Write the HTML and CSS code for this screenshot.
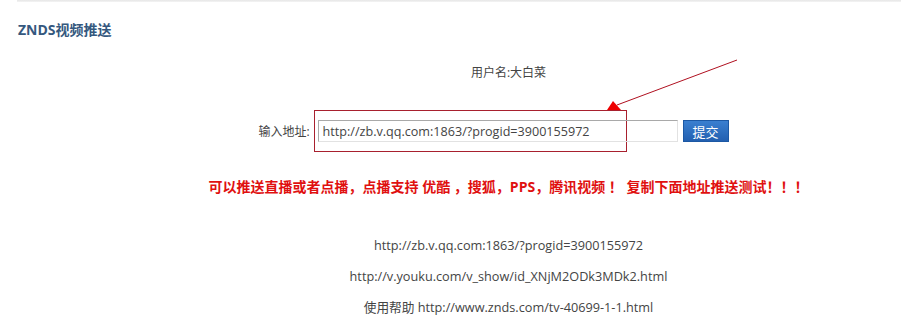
FILE: index.html
```html
<!DOCTYPE html>
<html lang="zh-CN">
<head>
  <meta charset="UTF-8" />
  <title>ZNDS视频推送</title>
  <link rel="stylesheet" href="styles.css">
</head>
<body>
  <div class="top-edge"></div>

  <h2 class="title">ZNDS视频推送</h2>

  <div class="panel">
    <div class="user">用户名:大白菜</div>

    <div class="push-row">
      <span class="label">输入地址:</span>
      <div class="mark">
        <input type="text" id="urlInput" value="http://zb.v.qq.com:1863/?progid=3900155972" />
        <svg class="arrow" width="140" height="56" viewBox="0 0 140 56">
          <line x1="132" y1="2" x2="12" y2="47" stroke="#b01020" stroke-width="1" />
          <polygon points="2,52 16,52 8,43" fill="#ee0000" />
        </svg>
      </div>
      <button class="submit">提交</button>
    </div>

    <div class="notice">可以推送直播或者点播，点播支持 优酷 ，搜狐，PPS，腾讯视频 ！ 复制下面地址推送测试！！！</div>

    <div class="links">
      <p>http://zb.v.qq.com:1863/?progid=3900155972</p>
      <p>http://v.youku.com/v_show/id_XNjM2ODk3MDk2.html</p>
      <p>使用帮助 http://www.znds.com/tv-40699-1-1.html</p>
    </div>
  </div>
</body>
</html>
```

FILE: styles.css
```css
html, body {
  margin: 0;
  padding: 0;
  background: #fff;
  font-family: 'Open Sans', 'Noto Sans CJK SC', sans-serif;
  font-size: 12px;
  color: #444;
  overflow: hidden;
}

.top-edge {
  margin-left: 17px;
  height: 2px;
  background: linear-gradient(#e6e6e6, #f4f4f4);
}

.title {
  margin: 19px 0 0 18px;
  font-size: 14px;
  line-height: 18px;
  font-weight: bold;
  color: #35587e;
}

.panel {
  padding-left: 116px;
  text-align: center;
}

.user {
  margin-top: 25px;
  line-height: 18px;
}

.push-row {
  display: flex;
  align-items: center;
  justify-content: center;
  margin-top: 28px;
  padding-right: 30px;
}

.label {
  margin-right: 4px;
}

.mark {
  position: relative;
  border: 1px solid #a8202e;
  padding: 9px 0 9px 3px;
  width: 308px;
  height: 22px;
}

.mark input {
  display: block;
  box-sizing: border-box;
  width: 360px;
  height: 22px;
  margin: 0;
  padding: 0 4px;
  border: 1px solid #a9a9a9;
  border-right-color: #e2e2e2;
  border-bottom-color: #e2e2e2;
  font: 12.6px 'Open Sans', sans-serif;
  color: #444;
  background: transparent;
  outline: none;
}

.arrow {
  position: absolute;
  left: 290px;
  top: -53px;
  overflow: visible;
}

.submit {
  margin-left: 56px;
  width: 46px;
  height: 22px;
  padding: 0;
  border: 1px solid #1c58a4;
  background: linear-gradient(#3a7fd0, #2360b0);
  color: #fff;
  font: 13px 'Noto Sans CJK SC', sans-serif;
}

.notice {
  margin-top: 26px;
  color: #e01010;
  font-weight: bold;
  font-size: 14px;
  line-height: 18px;
}

.links {
  margin-top: 40px;
}

.links p {
  margin: 0 0 13px;
  font-size: 12.7px;
  line-height: 18px;
}
```
